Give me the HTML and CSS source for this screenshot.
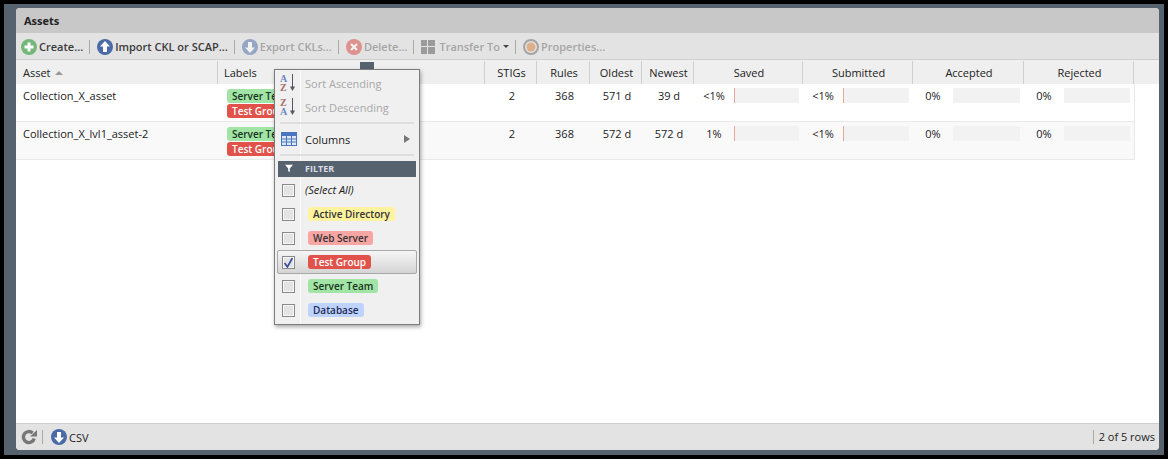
FILE: index.html
```html
<!DOCTYPE html>
<html lang="en">
<head>
  <meta charset="UTF-8" />
  <title>Assets</title>
  <link rel="stylesheet" href="styles.css">
</head>
<body>
  <div class="frame">
    <div class="panel">
      <div class="panel-title">Assets</div>

      <div class="toolbar">
        <span class="tool">
          <svg class="ico" viewBox="0 0 16 16"><circle cx="8" cy="8" r="8" fill="#75b77a"/><path d="M8 3.5v9M3.5 8h9" stroke="#fff" stroke-width="3"/></svg>
          Create...
        </span>
        <span class="tool-sep"></span>
        <span class="tool">
          <svg class="ico" viewBox="0 0 16 16"><circle cx="8" cy="8" r="8" fill="#4a6aa8"/><path d="M8 2l5 5.5h-3V13H6V7.5H3z" fill="#fff"/></svg>
          Import CKL or SCAP...
        </span>
        <span class="tool-sep"></span>
        <span class="tool off">
          <svg class="ico" viewBox="0 0 16 16"><circle cx="8" cy="8" r="8" fill="#4a6aa8"/><path d="M8 14l5-5.5h-3V3H6v5.5H3z" fill="#fff"/></svg>
          Export CKLs...
        </span>
        <span class="tool-sep"></span>
        <span class="tool off">
          <svg class="ico" viewBox="0 0 16 16"><circle cx="8" cy="8" r="8" fill="#d9433c"/><path d="M5 5l6 6M11 5l-6 6" stroke="#fff" stroke-width="2.2"/></svg>
          Delete...
        </span>
        <span class="tool-sep"></span>
        <span class="tool off">
          <svg class="ico ico-grid" viewBox="0 0 14 14"><path d="M0 0h6v6H0zM7 0h7v6H7zM0 7h6v7H0zM7 7h7v7H7z" fill="#555"/></svg>
          Transfer To<i class="caret"></i>
        </span>
        <span class="tool-sep"></span>
        <span class="tool off">
          <svg class="ico" viewBox="0 0 16 16"><circle cx="8" cy="8" r="7" fill="none" stroke="#666" stroke-width="2"/><circle cx="8" cy="8" r="4.5" fill="#d97c34"/></svg>
          Properties...
        </span>
      </div>

      <div class="grid-head">
        <div class="col col-left">Asset <i class="sort-up"></i></div>
        <div class="col col-left col-labels">Labels<span class="trigger"></span></div>
        <div class="col"></div>
        <div class="col">STIGs</div>
        <div class="col">Rules</div>
        <div class="col">Oldest</div>
        <div class="col">Newest</div>
        <div class="col">Saved</div>
        <div class="col">Submitted</div>
        <div class="col">Accepted</div>
        <div class="col">Rejected</div>
      </div>

      <div class="grid-body">
        <div class="row">
          <div class="cell cell-left">Collection_X_asset</div>
          <div class="cell cell-tags"><span class="tag tag-green">Server Team</span><span class="tag tag-red">Test Group</span></div>
          <div class="cell"></div>
          <div class="cell">2</div>
          <div class="cell">368</div>
          <div class="cell">571 d</div>
          <div class="cell">39 d</div>
          <div class="cell cell-pct"><span class="pct">&lt;1%</span><span class="bar bar-some"></span></div>
          <div class="cell cell-pct"><span class="pct">&lt;1%</span><span class="bar bar-some"></span></div>
          <div class="cell cell-pct"><span class="pct">0%</span><span class="bar"></span></div>
          <div class="cell cell-pct"><span class="pct">0%</span><span class="bar"></span></div>
        </div>
        <div class="row row-alt">
          <div class="cell cell-left">Collection_X_lvl1_asset-2</div>
          <div class="cell cell-tags"><span class="tag tag-green">Server Team</span><span class="tag tag-red">Test Group</span></div>
          <div class="cell cell-note">sample</div>
          <div class="cell">2</div>
          <div class="cell">368</div>
          <div class="cell">572 d</div>
          <div class="cell">572 d</div>
          <div class="cell cell-pct"><span class="pct">1%</span><span class="bar bar-some"></span></div>
          <div class="cell cell-pct"><span class="pct">&lt;1%</span><span class="bar bar-some"></span></div>
          <div class="cell cell-pct"><span class="pct">0%</span><span class="bar"></span></div>
          <div class="cell cell-pct"><span class="pct">0%</span><span class="bar"></span></div>
        </div>
      </div>

      <div class="footer">
        <svg class="ico-refresh" viewBox="0 0 16 16"><path d="M13.2 9.5A5.5 5.5 0 1 1 11.6 4" fill="none" stroke="#777" stroke-width="3.4"/><path d="M9 7.5h7V1z" fill="#777"/></svg>
        <span class="tool-sep"></span>
        <span class="tool tool-csv">
          <svg class="ico" viewBox="0 0 16 16"><circle cx="8" cy="8" r="8" fill="#4a6aa8"/><path d="M8 14l5-5.5h-3V3H6v5.5H3z" fill="#fff"/></svg>
          CSV
        </span>
        <span class="row-count">2 of 5 rows</span>
      </div>
    </div>

    <div class="menu">
      <div class="menu-item off">
        <svg class="sort-ico" viewBox="0 0 17 18"><text x="0" y="8" class="az-top">A</text><text x="0" y="17" class="az-bot">Z</text><path d="M12.5 0v15" stroke="#556" fill="none"/><path d="M10 12.5h5L12.5 17z" fill="#556"/></svg>
        Sort Ascending
      </div>
      <div class="menu-item off">
        <svg class="sort-ico" viewBox="0 0 17 18"><text x="0" y="8" class="az-bot">Z</text><text x="0" y="17" class="az-top">A</text><path d="M12.5 0v15" stroke="#556" fill="none"/><path d="M10 12.5h5L12.5 17z" fill="#556"/></svg>
        Sort Descending
      </div>
      <div class="menu-sep"></div>
      <div class="menu-item menu-columns">
        <svg class="columns-ico" viewBox="0 0 16 14"><rect x=".5" y=".5" width="15" height="13" fill="#dbe6f6" stroke="#4a76c0"/><path d="M1 1h14v3H1z" fill="#4a76c0"/><path d="M5.5 4v9M10.5 4v9M1 7h14M1 10h14" stroke="#4a76c0"/></svg>
        Columns
        <i class="arrow-right"></i>
      </div>
      <div class="menu-sep"></div>
      <div class="menu-filter">
        <svg class="funnel" viewBox="0 0 10 10"><path d="M0 1h10L6 5.5V10L4 9V5.5z" fill="#fff"/></svg>
        FILTER
      </div>
      <div class="menu-item menu-check menu-all"><span class="check"></span><em>(Select All)</em></div>
      <div class="menu-item menu-check"><span class="check"></span><span class="tag tag-yellow">Active Directory</span></div>
      <div class="menu-item menu-check"><span class="check"></span><span class="tag tag-pink">Web Server</span></div>
      <div class="menu-item menu-check menu-active">
        <span class="check"><svg viewBox="0 0 10 10"><path d="M1.5 5.5L4 9l4.5-8" fill="none" stroke="#3a4f99" stroke-width="1.6"/></svg></span>
        <span class="tag tag-red">Test Group</span>
      </div>
      <div class="menu-item menu-check"><span class="check"></span><span class="tag tag-green">Server Team</span></div>
      <div class="menu-item menu-check"><span class="check"></span><span class="tag tag-blue">Database</span></div>
    </div>
  </div>
</body>
</html>
```
FILE: styles.css
```css
:root {
  --slate: #57626f;
  --text: #222;
  --line: #cfcfcf;
}

html, body {
  margin: 0;
  height: 100%;
}

body {
  background-color: #000;
  box-sizing: border-box;
  padding: 4px;
  font-family: "Open Sans", sans-serif;
  font-size: 11px;
  color: var(--text);
}

.frame {
  position: relative;
  box-sizing: border-box;
  height: 100%;
  background-color: var(--slate);
  padding: 4px 5px 5px 12px;
}

.panel {
  height: 100%;
  display: flex;
  flex-direction: column;
  background-color: #fff;
  border-radius: 4px;
  overflow: hidden;
}

.panel-title {
  height: 25px;
  flex: none;
  background-color: #c8c8c8;
  padding-left: 8px;
  line-height: 25px;
  font-weight: 700;
}

.toolbar {
  height: 27px;
  flex: none;
  display: flex;
  align-items: center;
  background-color: #e3e3e3;
  padding: 1px 0 0 5px;
  box-sizing: border-box;
  border-bottom: 1px solid var(--line);
  font-weight: 600;
  font-size: 11px;
  color: #3a3a3a;
}

.tool {
  display: flex;
  align-items: center;
  gap: 2px;
  white-space: nowrap;
}

.tool.off {
  color: #a6a6a6;
}

.tool.off .ico {
  opacity: 0.5;
}

.tool-csv {
  font-weight: 400;
}

.ico {
  width: 16px;
  height: 16px;
}

.ico-grid {
  width: 14px;
  height: 14px;
  margin-right: 2px;
}

.tool-sep {
  width: 1px;
  height: 14px;
  background-color: #a9a99f;
  margin: 0 7px 0 6px;
}

.caret {
  display: inline-block;
  border: 3px solid transparent;
  border-top: 3px solid #444;
  border-bottom: 0;
  margin-left: 1px;
}

.grid-head,
.row {
  display: grid;
  grid-template-columns: 202px 156px 111px 52px 53px 52px 52px 109px 110px 111px 110px;
}

.grid-head {
  height: 24px;
  flex: none;
  background-color: #efefef;
  box-sizing: border-box;
  padding-top: 1px;
}

.col {
  position: relative;
  line-height: 23px;
  text-align: center;
  padding-left: 2px;
  border-right: 1px solid var(--line);
}

.col-left {
  text-align: left;
  padding-left: 7px;
}

.col-labels {
  padding-left: 6px;
  border-right: 0;
}

.sort-up {
  display: inline-block;
  border: 4px solid transparent;
  border-bottom: 4px solid #999;
  border-top: 0;
  margin: 0 0 2px 2px;
}

.trigger {
  position: absolute;
  right: 0;
  top: 1px;
  width: 14px;
  height: 22px;
  background-color: var(--slate);
}

.grid-body {
  flex: 1;
}

.row {
  width: 1119px;
  height: 38px;
  box-sizing: border-box;
  border-bottom: 1px solid #e9e9e9;
  border-right: 1px solid #e9e9e9;
}

.row-alt {
  background-color: #f9f9f9;
}

.cell {
  text-align: center;
  line-height: 24px;
  padding-left: 2px;
  white-space: nowrap;
  overflow: hidden;
}

.cell-left {
  text-align: left;
  padding-left: 7px;
}

.cell-tags {
  display: flex;
  flex-direction: column;
  align-items: flex-start;
  gap: 1px;
  padding: 5px 0 0 9px;
}

.cell-note {
  color: #aaa;
  font-style: italic;
  text-align: left;
  padding-left: 9px;
}

.cell-pct {
  display: flex;
  padding: 4px 4px 0 0;
}

.pct {
  width: 40px;
  flex: none;
  line-height: 16px;
}

.bar {
  flex: 1;
  height: 15px;
  background-color: #f2f2f2;
}

.bar-some {
  border-left: 1px solid #e8a598;
}

.tag {
  display: inline-block;
  height: 14px;
  line-height: 14px;
  padding: 0 5px;
  border-radius: 3px;
  font-size: 10px;
  font-weight: 600;
  white-space: nowrap;
}

.tag-green { background-color: #a2e4a6; color: #16331c; }
.tag-red { background-color: #e0524a; color: #fff; }
.tag-yellow { background-color: #fff3a0; color: #333; }
.tag-pink { background-color: #f7a6a4; color: #333; }
.tag-blue { background-color: #bfd3ff; color: #1d2a55; }

.footer {
  height: 27px;
  flex: none;
  display: flex;
  align-items: center;
  background-color: #e3e3e3;
  border-top: 1px solid var(--line);
  box-sizing: border-box;
  padding: 0 4px 0 5px;
}

.footer .tool-sep {
  margin: 0 8px 0 5px;
}

.ico-refresh {
  width: 16px;
  height: 16px;
}

.row-count {
  margin-left: auto;
  border-left: 1px solid #a9a99f;
  padding-left: 5px;
  line-height: 14px;
}

.menu {
  position: absolute;
  left: 270px;
  top: 65px;
  width: 144px;
  height: 252px;
  padding-top: 2px;
  background-color: #f0f0f0;
  background-image: linear-gradient(#fbfbfb, #fbfbfb);
  background-size: 1px 100%;
  background-position: 25px 0;
  background-repeat: no-repeat;
  border: 1px solid #7c7c7c;
  box-shadow: 1px 2px 4px rgba(0, 0, 0, 0.35);
  z-index: 2;
}

.menu-item {
  height: 24px;
  display: flex;
  align-items: center;
  padding-left: 5px;
  box-sizing: border-box;
}

.menu-item.off {
  color: #a8a8a8;
  padding-bottom: 2px;
}

.sort-ico {
  width: 17px;
  height: 18px;
  margin-right: 8px;
  flex: none;
}

.columns-ico {
  width: 16px;
  height: 14px;
  margin: 0 8px 0 1px;
  flex: none;
}

.az-top,
.az-bot {
  font-family: "Liberation Serif", serif;
  font-size: 10px;
  font-weight: 700;
}

.az-top { fill: #6d85c0; }
.az-bot { fill: #a86a6a; }

.menu-sep {
  height: 2px;
  margin: 2px 5px 4px;
  background-color: #dedede;
}

.menu-columns {
  height: 24px;
  padding-bottom: 2px;
}

.arrow-right {
  border: 4.5px solid transparent;
  border-left: 6px solid #777;
  border-right: 0;
  margin-left: auto;
  margin-right: 9px;
}

.menu-sep + .menu-filter {
  margin-top: 5px;
}

.menu-filter {
  display: flex;
  align-items: center;
  box-sizing: border-box;
  height: 16px;
  margin: 0 3px 1px;
  padding: 0 0 2px 7px;
  gap: 12px;
  background-color: var(--slate);
  color: #d8dde3;
  font-size: 9px;
  font-weight: 700;
}

.funnel {
  width: 8px;
  height: 8px;
}

.menu-check {
  gap: 13px;
  padding-left: 7px;
}

.menu-all {
  gap: 10px;
}

.menu-all em {
  margin-top: -2px;
}

.check {
  width: 11px;
  height: 11px;
  flex: none;
  background-color: #e4e4e4;
  border: 1px solid #8a8a8a;
  box-shadow: inset 0 0 0 1px #f6f6f6;
}

.check svg {
  display: block;
  width: 11px;
  height: 11px;
}

.menu-active {
  margin: 0 2px;
  padding-left: 4px;
  border: 1px solid #a8a8a8;
  border-radius: 2px;
  background-image: linear-gradient(#f6f6f6, #d4d4d4);
}
```
